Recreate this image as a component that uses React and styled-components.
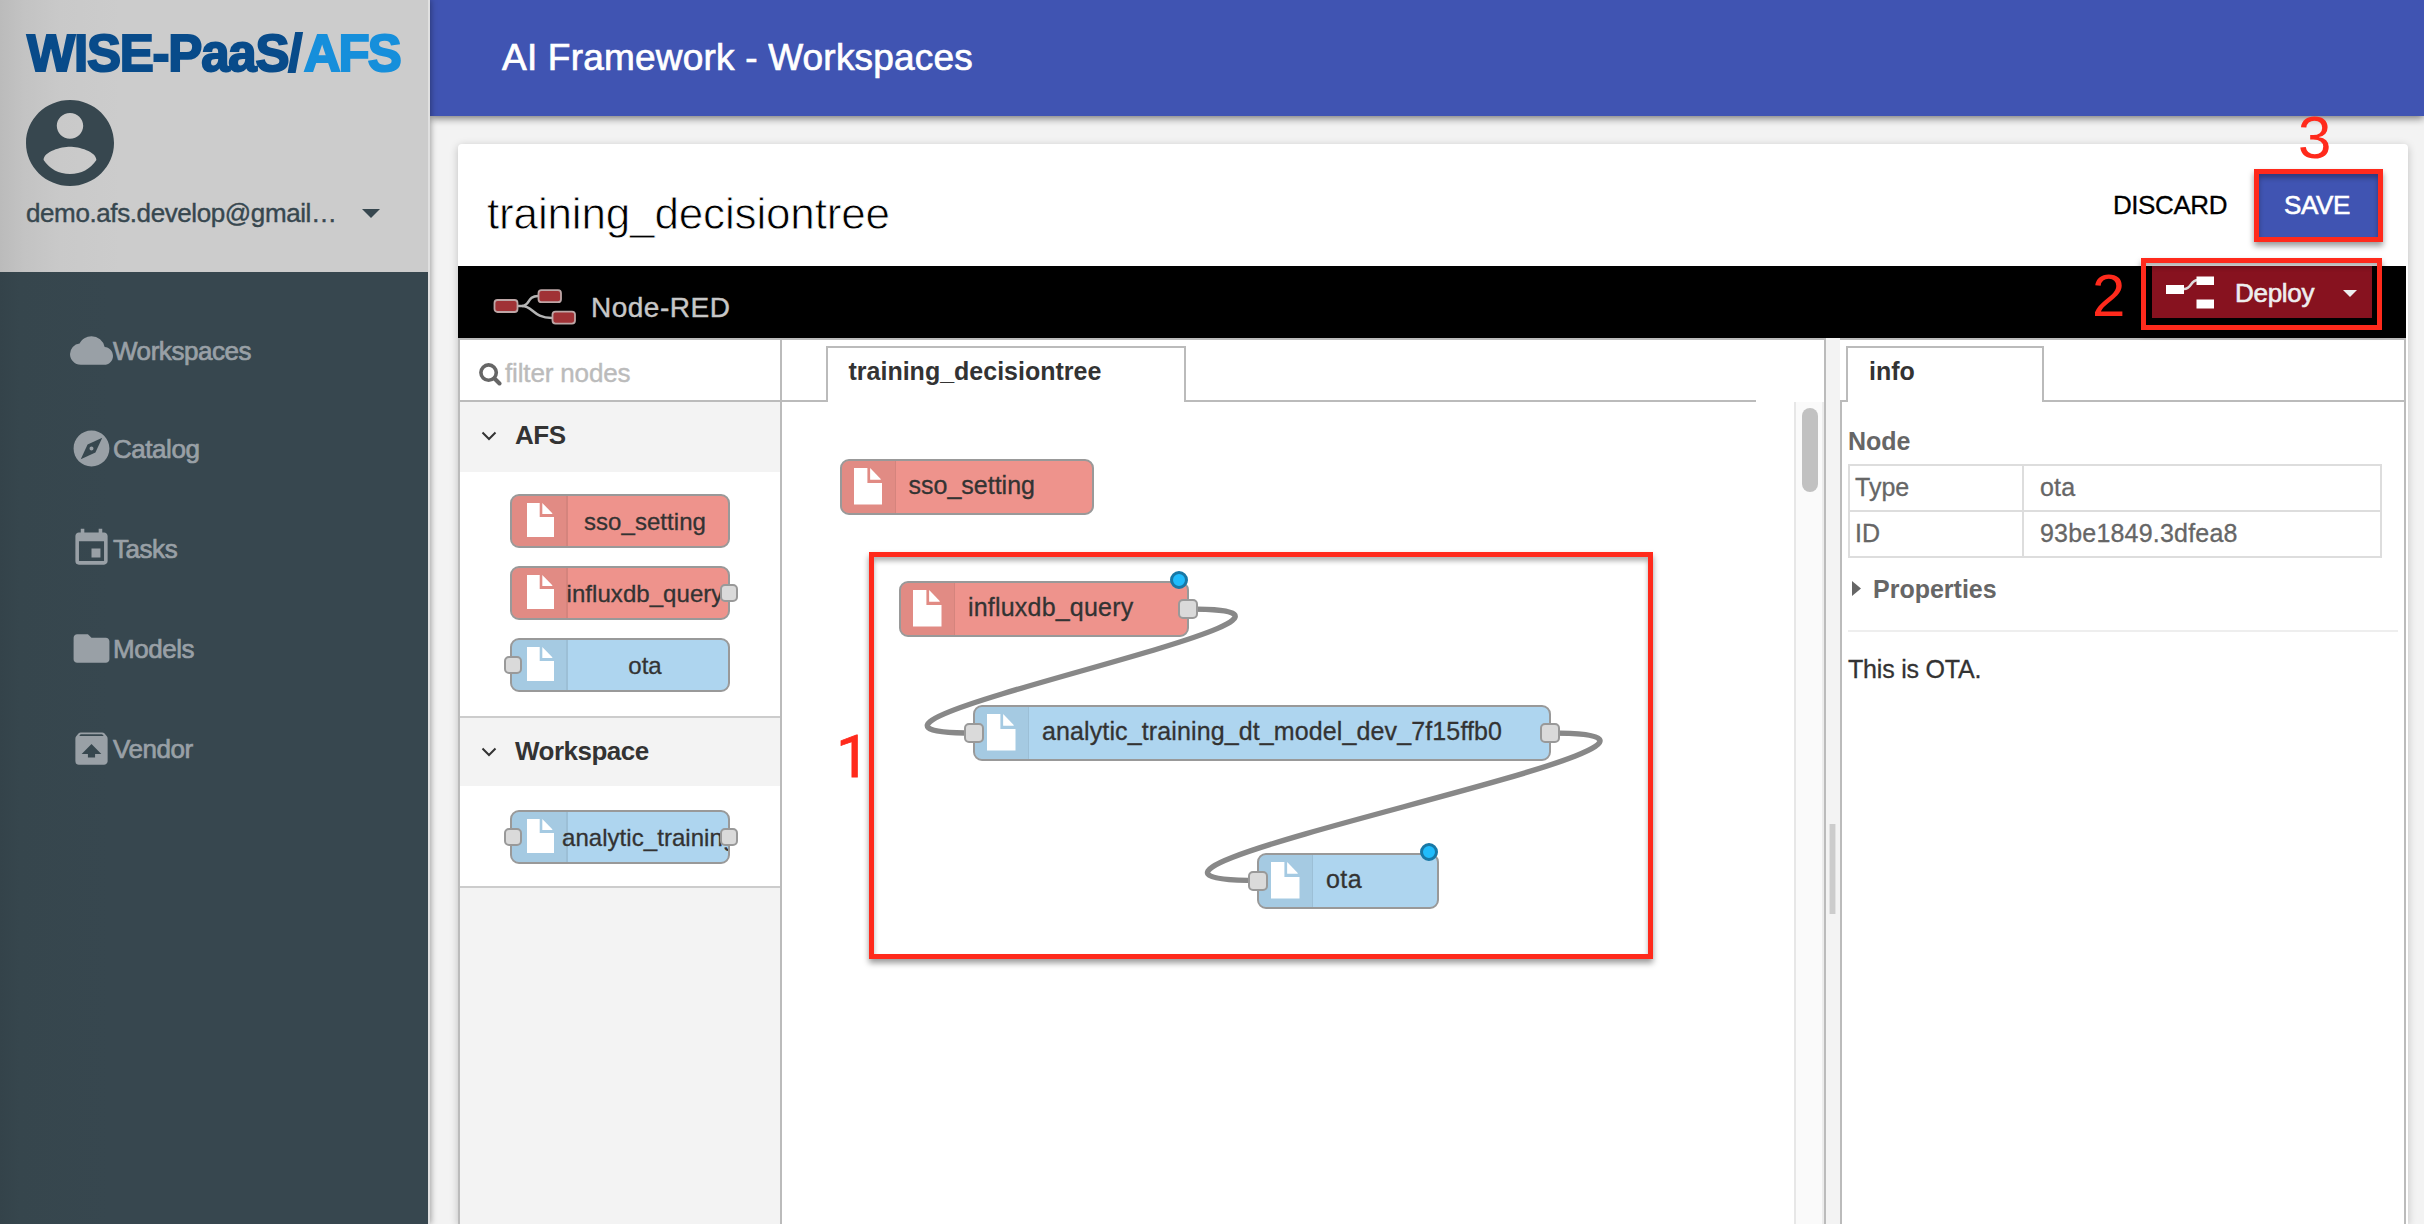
import React from 'react';
import styled, { createGlobalStyle } from 'styled-components';

const Global = createGlobalStyle`
  *, *::before, *::after { box-sizing: border-box; }
  body {
    margin: 0;
    background: #f3f3f3;
    font-family: "Liberation Sans", Arial, Helvetica, sans-serif;
    overflow: hidden;
  }
`;

const Page = styled.div`
  position: relative;
  display: flex;
  width: 2424px;
  height: 1224px;
  overflow: hidden;
  background: #f3f3f3;
`;

/* Sidebar */
const Sidebar = styled.aside`
  display: flex;
  flex-direction: column;
  flex: none;
  width: 430px;
  background: linear-gradient(90deg, #34434a 0, #36464d 20px, #37474f 110px);
  border-right: 2px solid #e0e0e0;
  box-shadow: 1px 0 6px rgba(0, 0, 0, 0.35);
  z-index: 2;
`;

const SidebarHead = styled.div`
  display: flex;
  flex-direction: column;
  height: 272px;
  padding: 23px 0 0 27px;
  background: linear-gradient(90deg, #bbbbbb 0, #c3c3c3 24px, #c9c9c9 60px, #cccccc 120px);
`;

const Logo = styled.div`
  height: 62px;
  line-height: 62px;
  font-size: 51px;
  font-weight: 700;
  letter-spacing: -1.2px;
  white-space: nowrap;
  color: #084b8a;
  -webkit-text-stroke: 2px #084b8a;
`;

const LogoAccent = styled.span`
  margin-left: 2.5px;
  letter-spacing: -2px;
  color: #168fdb;
  -webkit-text-stroke-color: #168fdb;
`;

const Avatar = styled.svg`
  display: block;
  width: 88px;
  height: 86px;
  margin: 15px 0 0 -1px;
  fill: #37474f;
`;

const Account = styled.div`
  display: flex;
  align-items: center;
  height: 38px;
  margin: 8px 0 0 -1px;
  color: #37474f;
  font-size: 26px;
  letter-spacing: -0.4px;
  -webkit-text-stroke: 0.4px #37474f;
`;

const AccountName = styled.span`
  width: 336px;
  white-space: nowrap;
`;

const Caret = styled.i`
  width: 0;
  height: 0;
  border: ${(p) => p.$half}px solid transparent;
  border-top-color: ${(p) => p.$color};
  border-bottom: 0;
`;

const Nav = styled.nav`
  display: flex;
  flex-direction: column;
  padding-top: 29px;
`;

const NavItem = styled.a`
  display: flex;
  align-items: center;
  height: 100px;
  margin-top: ${(p) => p.$shift || 0}px;
  padding-left: 70px;
  color: #99a0a6;
  font-size: 26px;
  letter-spacing: -0.45px;
  -webkit-text-stroke: 0.7px #99a0a6;

  svg {
    width: 43px;
    height: 43px;
    margin-top: -1px;
    fill: #99a0a6;
    stroke: none;
  }

  span {
    padding-top: 1px;
  }
`;

/* Main column */
const Main = styled.main`
  display: flex;
  flex-direction: column;
  flex: 1;
  min-width: 0;
`;

const TopBar = styled.header`
  display: flex;
  align-items: center;
  flex: none;
  height: 116px;
  padding-left: 72px;
  background: #4054b2;
  box-shadow: 0 2px 8px rgba(0, 0, 0, 0.55);
  color: #fff;
  font-size: 37px;
  letter-spacing: 0.2px;
  -webkit-text-stroke: 0.7px #fff;
`;

const Card = styled.section`
  display: flex;
  flex-direction: column;
  flex: 1;
  width: 1950px;
  margin: 28px 0 0 28px;
  background: #fff;
  border-radius: 4px 4px 0 0;
  box-shadow: 0 2px 8px rgba(0, 0, 0, 0.22);
`;

const CardHead = styled.div`
  display: flex;
  align-items: center;
  flex: none;
  height: 122px;
  padding: 0 28px 0 29px;
`;

const Title = styled.h1`
  flex: 1;
  margin: 0;
  padding-top: 17px;
  font-size: 44px;
  font-weight: 400;
  letter-spacing: -0.15px;
  color: #000;
  -webkit-text-stroke: 0.8px #fff;
`;

const TextButton = styled.button`
  width: ${(p) => p.$width}px;
  height: 66px;
  margin: 0 0 0 ${(p) => p.$gap || 0}px;
  padding: 0;
  border: 0;
  background: ${(p) => (p.$primary ? '#4054b2' : 'transparent')};
  color: ${(p) => (p.$primary ? '#fff' : '#000')};
  font: 26px "Liberation Sans", Arial, sans-serif;
  letter-spacing: -0.4px;
  -webkit-text-stroke: ${(p) => (p.$primary ? '0.6px #fff' : '0.3px #000')};
`;

/* Flow editor */
const Editor = styled.div`
  display: flex;
  flex-direction: column;
  flex: 1;
  width: 1948px;
`;

const EditorBar = styled.div`
  display: flex;
  flex: none;
  height: 72px;
  padding-left: 35px;
  background: #000;
`;

const Brand = styled.div`
  display: flex;
  align-items: center;
  flex: 1;
  padding-top: 10px;
  color: #c7c7c7;
  font-size: 28px;
  letter-spacing: 0.5px;
  -webkit-text-stroke: 0.4px #c7c7c7;

  svg { margin-right: 14px; }
  span { padding-top: 2px; }
`;

const Deploy = styled.div`
  display: flex;
  align-items: center;
  width: 220px;
  height: 52px;
  margin-right: 34px;
  padding: 3px 0 0 14px;
  background: #87121f;
  color: #eee;
  font-size: 26px;
  letter-spacing: -0.3px;
  -webkit-text-stroke: 0.6px #eee;

  svg { margin: -2px 19px 0 0; }
  span { width: 108px; }
`;

const Workbench = styled.div`
  display: flex;
  flex: 1;
`;

const Palette = styled.div`
  display: flex;
  flex-direction: column;
  width: 324px;
  border: 2px solid #bbb;
  border-bottom: 0;
  background: #f3f3f3;
`;

const Filter = styled.div`
  display: flex;
  align-items: center;
  height: 62px;
  padding-left: 19px;
  border-bottom: 2px solid #bbb;
  background: #fff;
  color: #bbb;
  font-size: 26px;
  letter-spacing: -0.15px;
  -webkit-text-stroke: 0.4px #bbb;

  svg { margin: 8px 3px 0 0; }
  span { padding-top: 6px; }
`;

const CategoryHead = styled.div`
  display: flex;
  align-items: center;
  height: ${(p) => p.$height}px;
  padding: 0 0 ${(p) => p.$lift}px 21px;
  color: #333;
  font-size: 26px;
  font-weight: 700;
  letter-spacing: -0.5px;

  svg { margin: 1px 18px 0 0; }
`;

const CategoryBody = styled.div`
  display: flex;
  flex-direction: column;
  gap: 18px;
  padding: ${(p) => p.$top}px 0 ${(p) => p.$bottom}px 50px;
  border-bottom: 2px solid #ccc;
  background: #fff;
`;

const tones = { red: '#ee938c', blue: '#aed5ef' };

const PaletteNode = styled.div`
  position: relative;
  display: flex;
  width: 220px;
  height: 54px;
  border: 2px solid #999;
  border-radius: 9px;
  background: ${(p) => tones[p.$tone]};
`;

const NodeIcon = styled.div`
  display: flex;
  align-items: center;
  justify-content: center;
  flex: none;
  width: ${(p) => p.$width}px;
  padding-left: ${(p) => p.$pad || 0}px;
  padding-bottom: ${(p) => p.$lift || 0}px;
  border-right: ${(p) => p.$line || 2}px solid rgba(0, 0, 0, 0.1);
  border-radius: 7px 0 0 7px;
  background: rgba(0, 0, 0, 0.05);
  background-clip: padding-box;
`;

const PaletteLabel = styled.div`
  position: relative;
  width: 168px;
  margin-left: -8px;
  padding-left: 2px;
  overflow: hidden;
  line-height: 51px;
  text-align: center;
  white-space: nowrap;
  color: #333;
  font-size: 24px;
  letter-spacing: 0.05px;
  -webkit-text-stroke: 0.3px #333;
`;

const Port = styled.i`
  position: absolute;
  top: ${(p) => p.$top}px;
  ${(p) => p.$side}: -${(p) => p.$out}px;
  width: ${(p) => p.$size}px;
  height: ${(p) => p.$size}px;
  border: 2px solid #999;
  border-radius: 5px;
  background: #dadada;
`;

const Workspace = styled.div`
  display: flex;
  flex-direction: column;
  width: 1044px;
  border-top: 2px solid #bbb;
  border-right: 2px solid #bbb;
`;

const TabStrip = styled.div`
  display: flex;
  flex: none;
  height: 62px;
  padding-right: ${(p) => p.$end || 0}px;
`;

const TabRule = styled.i`
  width: ${(p) => p.$width || 'auto'};
  flex: ${(p) => (p.$width ? 'none' : 1)};
  border-bottom: 2px solid #bbb;
`;

const Tab = styled.div`
  width: ${(p) => p.$width}px;
  margin-top: 6px;
  padding-left: ${(p) => p.$pad}px;
  border: 2px solid #bbb;
  border-bottom: 0;
  line-height: 47px;
  color: #333;
  font-size: 25px;
  font-weight: 700;
`;

const WorkArea = styled.div`
  display: flex;
  flex: 1;
`;

const Canvas = styled.div`
  position: relative;
  width: 1012px;
`;

const Wires = styled.svg`
  position: absolute;
  inset: 0;
  fill: none;
  stroke: #888;
  stroke-width: 5.4;
`;

const FlowNode = styled.div`
  position: absolute;
  left: ${(p) => p.$x}px;
  top: ${(p) => p.$y}px;
  display: flex;
  width: ${(p) => p.$w}px;
  height: 56px;
  border: 2px solid #999;
  border-radius: 9px;
  background: ${(p) => tones[p.$tone]};
`;

const FlowLabel = styled.div`
  padding-left: 13px;
  line-height: 49px;
  white-space: nowrap;
  color: #333;
  font-size: 25px;
  letter-spacing: ${(p) => p.$track || 0}px;
  -webkit-text-stroke: 0.3px #333;
`;

const ChangedDot = styled.i`
  position: absolute;
  top: -12px;
  right: -1px;
  width: 18px;
  height: 18px;
  border: 3px solid #1878a6;
  border-radius: 50%;
  background: #20bcfc;
`;

const ScrollTrack = styled.div`
  width: 30px;
  padding: 6px 0 0 6px;
  border-left: 2px solid #e7e7e7;
  border-right: 2px solid #ececec;
  background: #fafafa;
`;

const ScrollThumb = styled.div`
  width: 16px;
  height: 84px;
  border-radius: 8px;
  background: #c1c1c1;
`;

const Separator = styled.div`
  width: 14px;
  padding: 486px 0 0 3px;
  background: #f3f3f3;
`;

const Grip = styled.div`
  width: 7px;
  height: 90px;
  border: solid #e2e2e2;
  border-width: 0 1px;
  background: #ccc;
`;

const InfoPanel = styled.div`
  display: flex;
  flex-direction: column;
  width: 566px;
  border-top: 2px solid #bbb;
  border-right: 2px solid #bbb;
`;

const InfoBody = styled.div`
  flex: 1;
  padding: 22px 6px 0 6px;
  border-left: 2px solid #bbb;
  color: #666;
  font-size: 25px;
`;

const InfoHeading = styled.div`
  display: flex;
  align-items: center;
  height: 34px;
  font-weight: 700;
  svg { margin: -1px 12px 0 4px; }
`;

const Facts = styled.dl`
  display: grid;
  grid-template-columns: 174px 358px;
  width: 534px;
  margin: 6px 0 14px;
  border: solid #ddd;
  border-width: 2px 0 0 2px;
  -webkit-text-stroke: 0.3px #666;

  dt, dd {
    height: 46px;
    margin: 0;
    border: solid #ddd;
    border-width: 0 2px 2px 0;
    line-height: 43px;
  }
  dt { padding-left: 5px; }
  dd { padding-left: 16px; letter-spacing: 0.2px; }
`;

const HelpText = styled.p`
  margin: 24px 0 0;
  padding-top: 19px;
  border-top: 2px solid #eee;
  line-height: 36px;
  letter-spacing: -0.2px;
  color: #333;
  -webkit-text-stroke: 0.3px #333;
`;

/* Step callouts drawn over the page */
const Callout = styled.div`
  position: absolute;
  z-index: 5;
  left: ${(p) => p.$x}px;
  top: ${(p) => p.$y}px;
  width: ${(p) => p.$w}px;
  height: ${(p) => p.$h}px;
  border: 5px solid #ff2a1c;
  box-shadow: 0 4px 6px rgba(0, 0, 0, 0.4), inset 0 4px 5px rgba(0, 0, 0, 0.3);
`;

const Step = styled.div`
  position: absolute;
  z-index: 6;
  left: ${(p) => p.$x}px;
  top: ${(p) => p.$y}px;
  line-height: 60px;
  font-family: ${(p) => p.$font || '"Liberation Sans", Arial'}, sans-serif;
  font-size: 60px;
  color: #ff2a1c;
  -webkit-text-stroke: ${(p) => p.$stroke || 0}px #ff2a1c;
`;

const paths = {
  cloud: 'M19.35 10.04A7.49 7.49 0 0 0 12 4C9.11 4 6.6 5.64 5.35 8.04A5.994 5.994 0 0 0 0 14c0 3.31 2.69 6 6 6h13c2.76 0 5-2.24 5-5 0-2.64-2.05-4.78-4.65-4.96z',
  explore: 'M12 10.9c-.61 0-1.1.49-1.1 1.1s.49 1.1 1.1 1.1c.61 0 1.1-.49 1.1-1.1s-.49-1.1-1.1-1.1zM12 2C6.48 2 2 6.48 2 12s4.48 10 10 10 10-4.48 10-10S17.52 2 12 2zm2.19 12.19L6 18l3.81-8.19L18 6l-3.81 8.19z',
  event: 'M17 12h-5v5h5v-5zM16 1v2H8V1H6v2H5c-1.11 0-1.99.9-1.99 2L3 19a2 2 0 0 0 2 2h14c1.1 0 2-.9 2-2V5c0-1.1-.9-2-2-2h-1V1h-2zm3 18H5V8h14v11z',
  folder: 'M10 4H4c-1.1 0-1.99.9-1.99 2L2 18c0 1.1.9 2 2 2h16c1.1 0 2-.9 2-2V8c0-1.1-.9-2-2-2h-8l-2-2z',
  unarchive: 'M20.55 5.22l-1.39-1.68A1.51 1.51 0 0 0 18 3H6c-.47 0-.88.21-1.15.55L3.46 5.22C3.17 5.57 3 6.01 3 6.5V19a2 2 0 0 0 2 2h14c1.1 0 2-.9 2-2V6.5c0-.49-.17-.93-.45-1.28zM12 9.5l5.5 5.5H14v2h-4v-2H6.5L12 9.5zM5.12 5l.82-1h12l.93 1H5.12z',
  account: 'M12 2C6.48 2 2 6.48 2 12s4.48 10 10 10 10-4.48 10-10S17.52 2 12 2zm0 3c1.66 0 3 1.34 3 3s-1.34 3-3 3-3-1.34-3-3 1.34-3 3-3zm0 14.2a7.2 7.2 0 0 1-6-3.22c.03-1.99 4-3.08 6-3.08 1.99 0 5.97 1.09 6 3.08a7.2 7.2 0 0 1-6 3.22z',
};

const navItems = [
  { icon: 'cloud', label: 'Workspaces' },
  { icon: 'explore', label: 'Catalog', shift: -2 },
  { icon: 'event', label: 'Tasks' },
  { icon: 'folder', label: 'Models' },
  { icon: 'unarchive', label: 'Vendor' },
];

const FileIcon = ({ width, height }) => (
  <svg width={width} height={height} viewBox="0 0 27 34" preserveAspectRatio="none" fill="#fff">
    <path d="M0 0H12.7V14H27V34H0Z" />
    <path d="M15.3 0L25.3 10.2V11H15.3Z" />
  </svg>
);

const Chevron = () => (
  <svg width="16" height="10" viewBox="0 0 16 10" fill="none" stroke="#333" strokeWidth="2">
    <path d="M1.5 1.5L8 8L14.5 1.5" />
  </svg>
);

const NodeRedLogo = () => (
  <svg width="84" height="36" viewBox="0 0 84 36">
    <g fill="none" stroke="#b5b5b5" strokeWidth="2.6">
      <path d="M25 17H29C37 17 34 7 45 7" />
      <path d="M29 17C40 17 40 29 59 29" />
    </g>
    <g fill="#a03236" stroke="#bda6a6" strokeWidth="1.8">
      <rect x="1.5" y="11" width="23" height="12" rx="3" />
      <rect x="45.5" y="1.2" width="22.5" height="12" rx="3" />
      <rect x="59.5" y="22.6" width="22.5" height="12" rx="3" />
    </g>
  </svg>
);

const DeployIcon = () => (
  <svg width="50" height="34" viewBox="0 0 50 34">
    <path d="M18 13C26 13 24 4 32 4" fill="none" stroke="#ddd" strokeWidth="2.4" />
    <g fill="#fff">
      <rect x="0" y="9" width="18" height="9" />
      <rect x="30.5" y="0.5" width="17.5" height="8.5" />
      <rect x="30.5" y="23.5" width="17.5" height="9" />
    </g>
  </svg>
);

const SearchIcon = () => (
  <svg width="23" height="23" viewBox="0 0 23 23" fill="none" stroke="#666">
    <circle cx="9.6" cy="9.6" r="7.7" strokeWidth="3.6" />
    <path d="M15.5 15.5L20.5 20.5" strokeWidth="4" strokeLinecap="round" />
  </svg>
);

const PaletteItem = ({ tone, label, input, output }) => (
  <PaletteNode $tone={tone}>
    <NodeIcon $width={56} $pad={3} $lift={2}><FileIcon width={27} height={34} /></NodeIcon>
    <PaletteLabel>{label}</PaletteLabel>
    {input && <Port $side="left" $out={8} $top={16} $size={18} />}
    {output && <Port $side="right" $out={10} $top={16} $size={18} />}
  </PaletteNode>
);

const flowNodes = [
  { x: 57.5, y: 57, w: 254, tone: 'red', label: 'sso_setting' },
  { x: 117, y: 179, w: 290, tone: 'red', label: 'influxdb_query', output: true, changed: true, track: 0.2 },
  { x: 191, y: 303, w: 578, tone: 'blue', label: 'analytic_training_dt_model_dev_7f15ffb0', input: true, output: true, track: 0.12 },
  { x: 475, y: 451, w: 182, tone: 'blue', label: 'ota', input: true, changed: true, track: 0.4 },
];

export default function App() {
  return (
    <Page>
      <Global />
      <Sidebar>
        <SidebarHead>
          <Logo>WISE-PaaS/<LogoAccent>AFS</LogoAccent></Logo>
          <Avatar viewBox="2 2 20 20" preserveAspectRatio="none"><path d={paths.account} /></Avatar>
          <Account>
            <AccountName>demo.afs.develop@gmail…</AccountName>
            <Caret $half={9} $color="#37474f" />
          </Account>
        </SidebarHead>
        <Nav>
          {navItems.map((item) => (
            <NavItem key={item.label} $shift={item.shift}>
              <svg viewBox="0 0 24 24"><path d={paths[item.icon]} /></svg>
              <span>{item.label}</span>
            </NavItem>
          ))}
        </Nav>
      </Sidebar>

      <Main>
        <TopBar>AI Framework - Workspaces</TopBar>
        <Card>
          <CardHead>
            <Title>training_decisiontree</Title>
            <TextButton $width={116}>DISCARD</TextButton>
            <TextButton $width={126} $gap={26} $primary>SAVE</TextButton>
          </CardHead>
          <Editor>
            <EditorBar>
              <Brand><NodeRedLogo /><span>Node-RED</span></Brand>
              <Deploy>
                <DeployIcon />
                <span>Deploy</span>
                <Caret $half={7.5} $color="#eee" />
              </Deploy>
            </EditorBar>
            <Workbench>
              <Palette>
                <Filter><SearchIcon /><span>filter nodes</span></Filter>
                <CategoryHead $height={70} $lift={3}><Chevron />AFS</CategoryHead>
                <CategoryBody $top={22} $bottom={24}>
                  <PaletteItem tone="red" label="sso_setting" />
                  <PaletteItem tone="red" label="influxdb_query" output />
                  <PaletteItem tone="blue" label="ota" input />
                </CategoryBody>
                <CategoryHead $height={68} $lift={1}><Chevron />Workspace</CategoryHead>
                <CategoryBody $top={24} $bottom={22}>
                  <PaletteItem tone="blue" label="analytic_training" input output />
                </CategoryBody>
              </Palette>

              <Workspace>
                <TabStrip $end={68}>
                  <TabRule $width="44px" />
                  <Tab $width={360} $pad={20.5}>training_decisiontree</Tab>
                  <TabRule />
                </TabStrip>
                <WorkArea>
                  <Canvas>
                    <Wires width="1012" height="822">
                      <path d="M406.5 207C629.5 207 -31 331 192 331" />
                      <path d="M767.5 331C1021.5 331 222 478.5 476 478.5" />
                    </Wires>
                    {flowNodes.map((n) => (
                      <FlowNode key={n.label} $x={n.x} $y={n.y} $w={n.w} $tone={n.tone}>
                        <NodeIcon $width={54} $line={1} $lift={1}><FileIcon width={28.5} height={36.5} /></NodeIcon>
                        <FlowLabel $track={n.track}>{n.label}</FlowLabel>
                        {n.input && <Port $side="left" $out={11} $top={16} $size={20} />}
                        {n.output && <Port $side="right" $out={11} $top={16} $size={20} />}
                        {n.changed && <ChangedDot />}
                      </FlowNode>
                    ))}
                  </Canvas>
                  <ScrollTrack><ScrollThumb /></ScrollTrack>
                </WorkArea>
              </Workspace>

              <Separator><Grip /></Separator>

              <InfoPanel>
                <TabStrip>
                  <TabRule $width="6px" />
                  <Tab $width={198} $pad={21}>info</Tab>
                  <TabRule />
                </TabStrip>
                <InfoBody>
                  <InfoHeading>Node</InfoHeading>
                  <Facts>
                    <dt>Type</dt><dd>ota</dd>
                    <dt>ID</dt><dd>93be1849.3dfea8</dd>
                  </Facts>
                  <InfoHeading>
                    <svg width="9" height="15" viewBox="0 0 9 15" fill="#666"><path d="M0 0L9 7.5L0 15Z" /></svg>
                    Properties
                  </InfoHeading>
                  <HelpText>This is OTA.</HelpText>
                </InfoBody>
              </InfoPanel>
            </Workbench>
          </Editor>
        </Card>
      </Main>

      <Callout $x={869} $y={552} $w={784} $h={407} />
      <Callout $x={2141} $y={258} $w={241} $h={72} />
      <Callout $x={2254} $y={169} $w={129} $h={73} />
      <Step $x={836} $y={727} $font="Roboto" $stroke={0.8}>1</Step>
      <Step $x={2092} $y={266}>2</Step>
      <Step $x={2298} $y={108}>3</Step>
    </Page>
  );
}
